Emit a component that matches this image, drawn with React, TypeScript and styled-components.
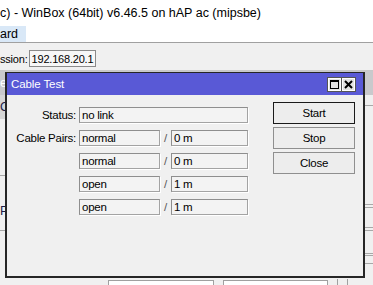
import React from 'react'
import styled, { createGlobalStyle } from 'styled-components'

const Global = createGlobalStyle`
  html, body { margin: 0; padding: 0; }
  body {
    width: 373px;
    height: 285px;
    overflow: hidden;
    background: #f0f0f0;
    font-family: "Liberation Sans", Arial, sans-serif;
    font-size: 11px;
    letter-spacing: -0.2px;
    color: #000;
  }
`

const cablePairs = [
  { state: 'normal', length: '0 m' },
  { state: 'normal', length: '0 m' },
  { state: 'open', length: '1 m' },
  { state: 'open', length: '1 m' },
]

const leftRows = [
  { h: 24, shaded: true, text: 'Ov' },
  { h: 57, line: true },
  { h: 55, line: true, text: 'P' },
]

const rightRows = [11, 99, 3, 20, 3, 23, 2, 8]

const MaxIcon = () => (
  <svg width='9' height='9' viewBox='0 0 9 9'>
    <rect x='0.5' y='0.5' width='8' height='8' fill='none' stroke='#000' />
    <rect x='0' y='0' width='9' height='2' fill='#000' />
  </svg>
)

const CloseIcon = () => (
  <svg width='9' height='9' viewBox='0 0 9 9'>
    <path d='M1 1 L8 8 M8 1 L1 8' stroke='#000' strokeWidth='2' />
  </svg>
)

export default function App() {
  return (<>
    <Global />
    <S.Window>
      <S.TitleBar>c) - WinBox (64bit) v6.46.5 on hAP ac (mipsbe)</S.TitleBar>
      <S.MenuBar>
        <S.MenuItem active>ard</S.MenuItem>
      </S.MenuBar>
      <S.Toolbar>
        <span>ssion:</span>
        <S.AddressBox>192.168.20.1</S.AddressBox>
      </S.Toolbar>

      <S.Workspace>
        <S.Backdrop>
          <S.BackHeader>
            <S.BackTab>e</S.BackTab>
          </S.BackHeader>
          <S.BackBody>
            <S.LeftCol>
              {leftRows.map((r, i) => (
                <S.LeftRow key={i} h={r.h} shaded={r.shaded} line={r.line}>
                  {r.text}
                </S.LeftRow>
              ))}
            </S.LeftCol>
            <S.RightCol>
              {rightRows.map((h, i) => <S.RightRow key={i} h={h} />)}
            </S.RightCol>
          </S.BackBody>
          <S.BackFooter>
            <S.FooterField w={104} />
            <S.FooterField w={103} />
            <S.FooterSep />
            <S.FooterSep />
          </S.BackFooter>
        </S.Backdrop>

        <S.Dialog>
          <S.DialogTitle>
            <span>Cable Test</span>
            <S.TitleButtons>
              <S.TitleButton><MaxIcon /></S.TitleButton>
              <S.TitleButton><CloseIcon /></S.TitleButton>
            </S.TitleButtons>
          </S.DialogTitle>
          <S.DialogBody>
            <S.Form>
              <S.Label>Status:</S.Label>
              <S.Field span>no link</S.Field>
              {cablePairs.map((p, i) => (
                <React.Fragment key={i}>
                  <S.Label>{i === 0 ? 'Cable Pairs:' : ''}</S.Label>
                  <S.Field>{p.state}</S.Field>
                  <S.Slash>/</S.Slash>
                  <S.Field>{p.length}</S.Field>
                </React.Fragment>
              ))}
            </S.Form>
            <S.Buttons>
              <S.Button primary>Start</S.Button>
              <S.Button>Stop</S.Button>
              <S.Button>Close</S.Button>
            </S.Buttons>
          </S.DialogBody>
        </S.Dialog>
      </S.Workspace>
    </S.Window>
  </>)
}

const S = {
  Window: styled.div`
    width: 373px;
    height: 285px;
    display: flex;
    flex-direction: column;
    overflow: hidden;
  `,
  TitleBar: styled.div`
    height: 26px;
    background: #fff;
    display: flex;
    align-items: center;
    font-size: 12.5px;
    letter-spacing: 0;
    white-space: nowrap;
    color: #000;
  `,
  MenuBar: styled.div`
    height: 16px;
    background: #fff;
    border-bottom: 1px solid #a0a0a0;
    display: flex;
  `,
  MenuItem: styled.div<{ active?: boolean }>`
    padding: 0 8px 0 0;
    display: flex;
    align-items: center;
    font-size: 12.5px;
    letter-spacing: 0;
    background: ${p => p.active ? '#d9e8f7' : 'transparent'};
  `,
  Toolbar: styled.div`
    height: 28px;
    display: flex;
    align-items: center;
    gap: 1px;
    font-size: 11px;
    border-bottom: 1px solid #c8c8c8;
    box-sizing: border-box;
    padding-top: 4px;
  `,
  AddressBox: styled.div`
    width: 67px;
    height: 17px;
    box-sizing: border-box;
    border: 1px solid #8a8a8a;
    background: #f7f7f7;
    display: flex;
    align-items: center;
    padding-left: 2px;
    white-space: nowrap;
  `,
  Workspace: styled.div`
    flex: 1;
    position: relative;
  `,
  Backdrop: styled.div`
    height: 100%;
    display: flex;
    flex-direction: column;
  `,
  BackHeader: styled.div`
    height: 24px;
    background: #c9c9cc;
    display: flex;
  `,
  BackTab: styled.div`
    color: #fff;
    font-size: 12.5px;
    display: flex;
    align-items: center;
  `,
  BackBody: styled.div`
    flex: 1;
    display: flex;
    justify-content: space-between;
  `,
  LeftCol: styled.div`
    width: 60px;
    display: flex;
    flex-direction: column;
  `,
  LeftRow: styled.div<{ h: number; shaded?: boolean; line?: boolean }>`
    height: ${p => p.h}px;
    box-sizing: border-box;
    background: ${p => p.shaded ? '#d6d6d6' : 'transparent'};
    border-bottom: ${p => p.line ? '1px solid #a8a8a8' : 'none'};
    display: flex;
    align-items: ${p => p.shaded ? 'center' : 'flex-end'};
    padding-bottom: ${p => p.shaded ? 0 : 12}px;
    font-size: 12.5px;
    color: #1c1c48;
  `,
  RightCol: styled.div`
    width: 8px;
    display: flex;
    flex-direction: column;
  `,
  RightRow: styled.div<{ h: number }>`
    height: ${p => p.h}px;
    box-sizing: border-box;
    border-bottom: 1px solid #a8a8a8;
  `,
  BackFooter: styled.div`
    height: 6px;
    display: flex;
    align-items: flex-end;
    padding-left: 108px;
    gap: 9px;
  `,
  FooterField: styled.div<{ w: number }>`
    width: ${p => p.w}px;
    height: 4px;
    border: 1px solid #a0a0a0;
    border-bottom: none;
    background: #fff;
  `,
  FooterSep: styled.div`
    width: 1px;
    height: 6px;
    background: #a0a0a0;
  `,
  Dialog: styled.div`
    position: absolute;
    left: 5px;
    top: 1px;
    width: 360px;
    height: 206px;
    box-sizing: border-box;
    border: 2px solid #262626;
    border-top-width: 1px;
    background: #f0f0f0;
    display: flex;
    flex-direction: column;
    font-size: 11.5px;
    letter-spacing: -0.25px;
  `,
  DialogTitle: styled.div`
    height: 22px;
    background: #5959d6;
    color: #fff;
    font-size: 11.5px;
    letter-spacing: -0.1px;
    display: flex;
    align-items: center;
    justify-content: space-between;
    padding: 0 8px 0 4px;
  `,
  TitleButtons: styled.div`
    display: flex;
    gap: 1px;
  `,
  TitleButton: styled.div`
    width: 13px;
    height: 13px;
    box-sizing: border-box;
    background: #e4e4e4;
    border: 1px solid #fff;
    outline: 1px solid #555;
    display: flex;
    align-items: center;
    justify-content: center;
  `,
  DialogBody: styled.div`
    flex: 1;
    display: flex;
    align-items: flex-start;
  `,
  Form: styled.div`
    display: grid;
    grid-template-columns: 72px 81px 11px 77px;
    grid-auto-rows: 16px;
    row-gap: 7px;
    padding-top: 12px;
  `,
  Label: styled.div`
    text-align: right;
    padding-right: 3px;
    align-self: center;
    white-space: nowrap;
  `,
  Field: styled.div<{ span?: boolean }>`
    grid-column: ${p => p.span ? '2 / 5' : 'auto'};
    box-sizing: border-box;
    border: 1px solid #a3a3a3;
    border-top-color: #8e8e8e;
    border-left-color: #8e8e8e;
    box-shadow: 1px 1px 0 #fff;
    background: #f3f3f3;
    display: flex;
    align-items: center;
    padding-left: 2px;
    white-space: nowrap;
  `,
  Slash: styled.div`
    text-align: center;
    align-self: center;
    color: #555;
  `,
  Buttons: styled.div`
    display: flex;
    flex-direction: column;
    gap: 3px;
    margin-left: 25px;
    padding-top: 7px;
  `,
  Button: styled.div<{ primary?: boolean }>`
    width: 82px;
    height: 22px;
    box-sizing: border-box;
    border: 1px solid ${p => p.primary ? '#1a1a1a' : '#8f8f8f'};
    background: #ededed;
    display: flex;
    align-items: center;
    justify-content: center;
  `,
}
